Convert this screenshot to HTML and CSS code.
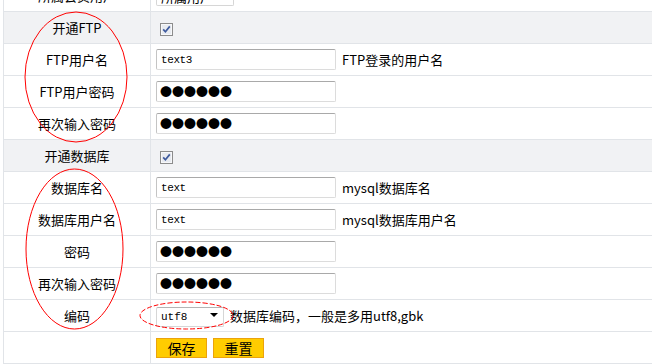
FILE: index.html
```html
<!DOCTYPE html>
<html lang="zh-CN">
<head>
  <meta charset="UTF-8" />
  <title>开通FTP和数据库</title>
  <link rel="stylesheet" href="styles.css">
</head>
<body>
  <div class="page">
    <form class="form-box">
      <table class="form-table">
        <tr>
          <td class="label">所属会员用户</td>
          <td><span class="select-box user"><select name="user"><option>所属用户</option></select></span></td>
        </tr>
        <tr class="on">
          <td class="label">开通FTP</td>
          <td>
            <span class="check">
              <svg width="13" height="13" viewBox="0 0 13 13"><rect x="0.5" y="0.5" width="12" height="12" fill="#e8ebf0" stroke="#8c8c8c"/><rect x="1.5" y="1.5" width="10" height="10" fill="none" stroke="#f7f8fa"/><path d="M3.2 6.4 L5.4 8.8 L9.8 3.4" fill="none" stroke="#3e5a9e" stroke-width="1.7"/></svg>
            </span>
          </td>
        </tr>
        <tr>
          <td class="label">FTP用户名</td>
          <td><input class="txt" type="text" name="ftpuser" value="text3" /><span class="tip">FTP登录的用户名</span></td>
        </tr>
        <tr>
          <td class="label">FTP用户密码</td>
          <td><input class="txt pwd" type="text" name="ftppass" value="●●●●●●" /></td>
        </tr>
        <tr>
          <td class="label">再次输入密码</td>
          <td><input class="txt pwd" type="text" name="ftppass2" value="●●●●●●" /></td>
        </tr>
        <tr class="on">
          <td class="label">开通数据库</td>
          <td>
            <span class="check">
              <svg width="13" height="13" viewBox="0 0 13 13"><rect x="0.5" y="0.5" width="12" height="12" fill="#e8ebf0" stroke="#8c8c8c"/><rect x="1.5" y="1.5" width="10" height="10" fill="none" stroke="#f7f8fa"/><path d="M3.2 6.4 L5.4 8.8 L9.8 3.4" fill="none" stroke="#3e5a9e" stroke-width="1.7"/></svg>
            </span>
          </td>
        </tr>
        <tr>
          <td class="label">数据库名</td>
          <td><input class="txt" type="text" name="dbname" value="text" /><span class="tip">mysql数据库名</span></td>
        </tr>
        <tr>
          <td class="label">数据库用户名</td>
          <td><input class="txt" type="text" name="dbuser" value="text" /><span class="tip">mysql数据库用户名</span></td>
        </tr>
        <tr>
          <td class="label">密码</td>
          <td><input class="txt pwd" type="text" name="dbpass" value="●●●●●●" /></td>
        </tr>
        <tr>
          <td class="label">再次输入密码</td>
          <td><input class="txt pwd" type="text" name="dbpass2" value="●●●●●●" /></td>
        </tr>
        <tr>
          <td class="label">编码</td>
          <td><span class="select-box charset"><select name="charset"><option>utf8</option><option>gbk</option></select></span><span class="tip">数据库编码，一般是多用utf8,gbk</span></td>
        </tr>
        <tr>
          <td class="label"></td>
          <td><button class="btn" type="submit">保存</button><button class="btn" type="reset">重置</button></td>
        </tr>
      </table>
    </form>

    <svg class="marks" width="652" height="364" viewBox="0 0 652 364">
      <ellipse cx="76" cy="77" rx="51" ry="65" fill="none" stroke="#f00" />
      <ellipse cx="74.5" cy="249" rx="48.5" ry="80" fill="none" stroke="#f00" />
      <ellipse cx="186.5" cy="315.5" rx="46.5" ry="13.5" fill="none" stroke="#f00" stroke-dasharray="5 2" />
    </svg>
  </div>
</body>
</html>
```

FILE: styles.css
```css
body { margin: 0; background: #fff; color: #000; font-family: "Noto Sans CJK SC", "Liberation Sans", sans-serif; font-size: 13px; }
.page { position: relative; display: flow-root; padding-left: 3px; overflow: hidden; height: 364px; }
.form-table { width: 100%; margin-top: -20px; border-collapse: collapse; border-left: 1px solid #e1e4e8; }
.form-table td { height: 31px; padding: 0 5px; border-bottom: 1px solid #e1e4e8; vertical-align: middle; white-space: nowrap; }
.form-table td.label { width: 136px; text-align: center; border-right: 1px solid #e1e4e8; }
.form-table tr.on td { background: #f1f2f4; }
.txt { width: 180px; height: 21px; box-sizing: border-box; padding: 0 4px; border: 1px solid #dcdcdc; border-top-color: #a9a9a9; border-left-color: #c4c4c4; border-radius: 2px; font-family: "Liberation Mono", monospace; font-size: 11px; letter-spacing: -0.4px; vertical-align: middle; background: #fff; color: #000; }
.txt.pwd { font-family: "Noto Sans CJK SC", sans-serif; font-size: 12px; letter-spacing: 0; padding: 0 3px; }
.tip { margin-left: 6px; vertical-align: middle; }
.check { display: inline-block; margin-left: 4px; vertical-align: middle; line-height: 0; }
.select-box { position: relative; display: inline-block; vertical-align: middle; }
.select-box select { appearance: none; height: 20px; box-sizing: border-box; padding: 0 4px; border: 1px solid #d6d6d6; border-top-color: #b4b4b4; border-radius: 2px; background: #fff; color: #000; }
.select-box::after { content: ""; position: absolute; top: 8px; right: 6px; border-left: 4px solid transparent; border-right: 4px solid transparent; border-top: 4px solid #000; pointer-events: none; }
.select-box.user select { width: 78px; font-family: "Noto Sans CJK SC", sans-serif; font-size: 13px; }
.select-box.charset select { width: 68px; font-family: "Liberation Mono", monospace; font-size: 11px; }
.btn { width: 51px; height: 20px; margin-right: 6px; padding: 0; border: 1px solid #eba30c; background: #ffcc00; color: #000; font-family: "Noto Sans CJK SC", sans-serif; font-size: 14px; line-height: 18px; vertical-align: middle; cursor: pointer; }
.marks { position: absolute; top: 0; left: 0; pointer-events: none; }
```
